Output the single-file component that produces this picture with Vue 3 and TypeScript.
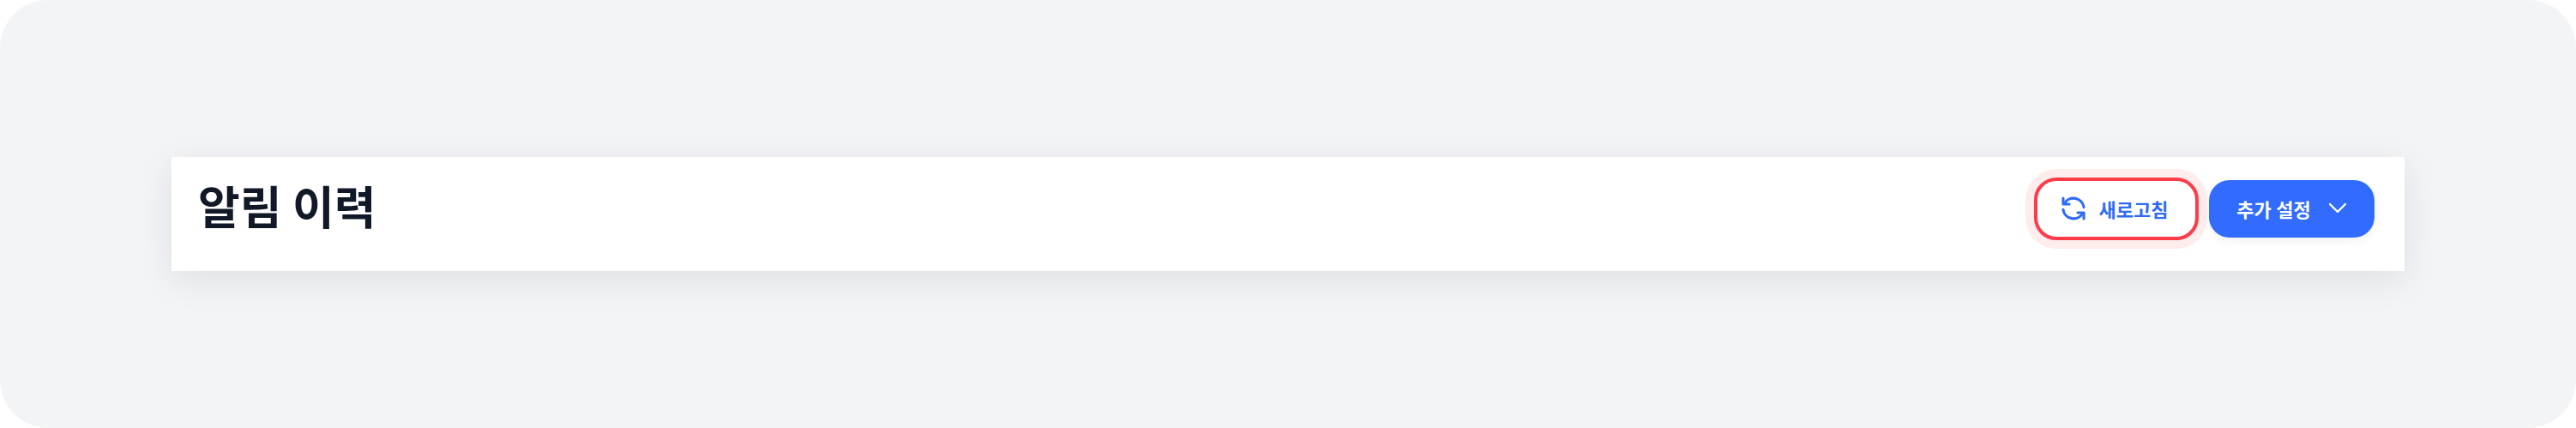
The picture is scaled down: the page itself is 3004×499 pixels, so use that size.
<script setup lang="ts">
const title: string = '알림 이력'
</script>

<template>
  <div class="canvas">
    <header class="bar">
      <h1 class="title">{{ title }}</h1>
      <div class="actions">
        <button class="btn refresh" type="button">
          <svg class="icon" viewBox="0 0 24 24" fill="none" stroke="currentColor" stroke-width="2.2" stroke-linecap="round" stroke-linejoin="round">
            <path d="M20.5 11a8.6 8.6 0 0 0-16-3" />
            <path d="M3.5 3.5V8.5h5" />
            <path d="M3.5 13a8.6 8.6 0 0 0 16 3" />
            <path d="M20.5 20.5V15.5h-5" />
          </svg>
          <span>새로고침</span>
        </button>
        <button class="btn primary" type="button">
          <span>추가 설정</span>
          <svg class="chevron" viewBox="0 0 22 13" fill="none" stroke="currentColor" stroke-width="2.4" stroke-linecap="round" stroke-linejoin="round">
            <path d="M2 2l9 9 9-9" />
          </svg>
        </button>
      </div>
    </header>
  </div>
</template>

<style>
html, body { margin: 0; background: #ffffff; }
</style>

<style scoped>
.canvas {
  width: 3004px;
  height: 499px;
  box-sizing: border-box;
  padding: 0 200px;
  display: flex;
  align-items: center;
  background: #f3f4f6;
  border-radius: 56px;
  font-family: Inter, "Noto Sans CJK KR", sans-serif;
}
.bar {
  flex: 1;
  height: 133px;
  box-sizing: border-box;
  padding: 0 35px 0 31px;
  display: flex;
  align-items: center;
  justify-content: space-between;
  background: #ffffff;
  box-shadow: 0 10px 40px rgba(17, 24, 39, 0.09);
}
.title {
  margin: 0 0 11px;
  font-size: 53px;
  font-weight: 700;
  line-height: 1.2;
  color: #111827;
}
.actions {
  display: flex;
  align-items: center;
  gap: 12px;
  margin-bottom: 12px;
}
.btn {
  display: flex;
  align-items: center;
  justify-content: center;
  box-sizing: border-box;
  font-family: inherit;
  font-size: 22px;
  font-weight: 600;
  padding-top: 0;
  padding-bottom: 2px;
}
.refresh {
  width: 192px;
  height: 73px;
  gap: 13px;
  padding-right: 13px;
  color: #2f6bf5;
  background: #ffffff;
  border: 4px solid #ff3b4a;
  border-radius: 26px;
  box-shadow: 0 0 0 10px #ffecec;
}
.icon {
  width: 34px;
  height: 34px;
}
.primary {
  width: 193px;
  height: 67px;
  gap: 20px;
  color: #ffffff;
  background: #316bff;
  border: none;
  border-radius: 24px;
  box-shadow: 0 4px 12px rgba(17, 24, 39, 0.06);
}
.chevron {
  width: 22px;
  height: 13px;
}
</style>
